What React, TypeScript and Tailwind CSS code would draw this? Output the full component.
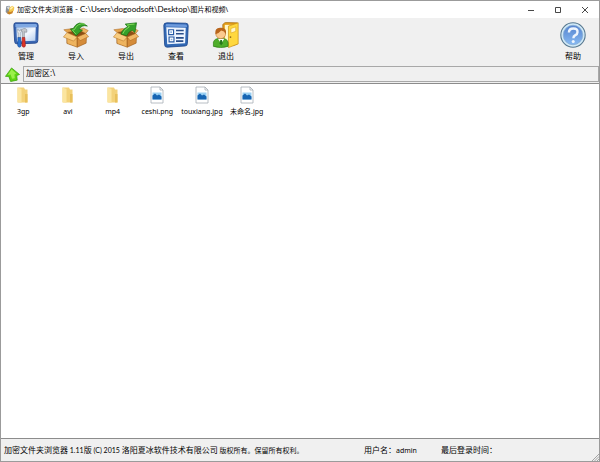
import type { ReactNode } from "react";

const fontFamily = "font-['Noto_Sans','Noto_Sans_CJK_SC',sans-serif]";

export default function App() {
    return (
        <div className={`flex min-h-screen flex-col border border-[#9b9b9b] bg-[#f0f0f0] text-black ${fontFamily}`}>
            <TitleBar />
            <Toolbar />
            <AddressBar />
            <FileList />
            <StatusBar />
        </div>
    );
}

function TitleBar() {
    return (
        <header className="flex h-[17px] items-center bg-white pr-px pl-1">
            <AppIcon />
            <h1 className="ml-[2px] flex-1 text-[7px] leading-[12px] whitespace-pre">
                加密文件夹浏览器
                <span className="font-['Lato',sans-serif] text-[8px]">{" - C:\\Users\\dogoodsoft\\Desktop\\"}</span>
                图片和视频\
            </h1>
            <WindowButton label="最小化">
                <path d="M1 4.5h6" />
            </WindowButton>
            <WindowButton label="最大化">
                <path d="M1.5 1.5h5v5h-5z" />
            </WindowButton>
            <WindowButton label="关闭">
                <path d="M1 1l6 6M7 1l-6 6" />
            </WindowButton>
        </header>
    );
}

function WindowButton({ label, children }: { label: string; children: ReactNode }) {
    return (
        <button type="button" aria-label={label} className="flex h-full w-[27px] items-center justify-center">
            <svg viewBox="0 0 8 8" className="size-2" fill="none" stroke="#333" strokeWidth="0.9">
                {children}
            </svg>
        </button>
    );
}

function Toolbar() {
    return (
        <nav className="flex h-[47px] items-start">
            <ToolButton label="管理"><ManageIcon /></ToolButton>
            <ToolButton label="导入"><ImportIcon /></ToolButton>
            <ToolButton label="导出"><ExportIcon /></ToolButton>
            <ToolButton label="查看"><ViewIcon /></ToolButton>
            <ToolButton label="退出"><ExitIcon /></ToolButton>
            <div className="ml-auto pr-px">
                <ToolButton label="帮助"><HelpIcon /></ToolButton>
            </div>
        </nav>
    );
}

function ToolButton({ label, children }: { label: string; children: ReactNode }) {
    return (
        <button type="button" className="flex w-[50px] flex-col items-center pt-1">
            {children}
            <span className="text-[8px] leading-4">{label}</span>
        </button>
    );
}

function AddressBar() {
    return (
        <div className="flex h-[18px] items-center">
            <button type="button" aria-label="向上" className="flex w-[22px] justify-center">
                <UpIcon />
            </button>
            <input
                type="text"
                aria-label="地址"
                defaultValue="加密区:\"
                className="h-4 min-w-0 flex-1 border border-[#a8a8a8] bg-[#f0f0f0] px-[2px] pb-[3px] text-[8px] leading-[12px] outline-none"
            />
        </div>
    );
}

const files = [
    { name: "3gp", type: "folder" },
    { name: "avi", type: "folder" },
    { name: "mp4", type: "folder" },
    { name: "ceshi.png", type: "image" },
    { name: "touxiang.jpg", type: "image" },
    { name: "未命名.jpg", type: "image" },
];

function FileList() {
    return (
        <main className="flex-1 border-y border-[#8c8c8c] bg-white pt-px">
            <ul className="grid w-[268px] grid-cols-6">
                {files.map((file) => (
                    <li key={file.name}>
                        <button type="button" className="flex w-full flex-col items-center">
                            {file.type === "folder" ? <FolderIcon /> : <ImageIcon />}
                            <span className="text-[7px] leading-[14px] whitespace-nowrap">{file.name}</span>
                        </button>
                    </li>
                ))}
            </ul>
        </main>
    );
}

function StatusBar() {
    return (
        <footer className="flex h-[22px] items-center pl-[3px] text-[8px] leading-[12px] whitespace-nowrap">
            <p className="w-[360px]">
                加密文件夹浏览器<Latin>{" 1.11"}</Latin>版<Latin>{" (C) 2015 "}</Latin>
                洛阳夏冰软件技术有限公司<span className="text-[7px]"> 版权所有。保留所有权利。</span>
            </p>
            <p className="w-[77px]">用户名：<span className="text-[7px]">admin</span></p>
            <p className="flex-1">最后登录时间：</p>
            <svg viewBox="0 0 8 8" className="size-2 self-end" stroke="#9a9a9a" strokeWidth="0.9">
                <path d="M1 8l7-7M3.5 8L8 3.5M6 8l2-2" />
            </svg>
        </footer>
    );
}

function Latin({ children }: { children: ReactNode }) {
    return <span className="font-['Lato',sans-serif] text-[7px]">{children}</span>;
}

function AppIcon() {
    return (
        <svg viewBox="0 0 16 16" className="size-[10px]">
            <path d="M2 2l5-1 2 3-1 8-4 2-3-3z" fill="#8c9299" />
            <path d="M3 3l4-1 1 3-3 2z" fill="#d5dce3" />
            <path d="M7 4l5-3 3 3-1 5-5 4-3-2z" fill="#f4c64e" />
            <path d="M8 5l4-3 1 2-4 4z" fill="#fff1ae" />
            <path d="M4 10l5 1 4-2-1 4-5 2-3-1z" fill="#c98224" />
        </svg>
    );
}

function ManageIcon() {
    return (
        <svg viewBox="0 0 32 32" className="h-[26px] w-[26px]">
            <defs>
                <linearGradient id="pane" x1="0" y1="0" x2="1" y2="1">
                    <stop offset="0" stopColor="#aecbf0" />
                    <stop offset="0.5" stopColor="#f2f7fe" />
                    <stop offset="1" stopColor="#b4cdef" />
                </linearGradient>
            </defs>
            <path d="M3 1h25q3 0 3 3l-.5 19q0 3-3 3L5 27q-3 0-3-3L1 4q0-3 2-3z" fill="#3b67b3" stroke="#1d4389" />
            <path d="M3 2.500h25q1.500 0 1.500 2V6H3z" fill="#7fa8e2" />
            <path d="M4 6.500h24l-.5 16.500-22.500 1z" fill="url(#pane)" />
            <path d="M6 8.500l-1 3 1.500 2V20h2.500v-6.500l1.500-2-.5-3-1.500 2.500H7.500z" fill="#e4e7eb" stroke="#818994" strokeWidth="0.6" />
            <path d="M10 10q2.500-2.500 5-2l2 1.500v3h-2l-1-.5v8h-2.500v-8z" fill="#c4c8cd" stroke="#767b83" strokeWidth="0.6" />
            <path d="M6 19h3.500l.5 9.500q0 2.500-2 2.500t-2.200-2.500z" fill="#2b72cf" stroke="#16468f" strokeWidth="0.7" />
            <path d="M11.500 19h3l.8 9.500q0 2.500-2 2.500T11 28.500z" fill="#dc3428" stroke="#951c1c" strokeWidth="0.7" />
        </svg>
    );
}

// the carton is shared by the import and export icons
function Carton() {
    return (
        <>
            <path d="M5 13l13-4 10 4v11l-11 6.500L4.500 26z" fill="#8d4f16" />
            <path d="M4.500 16l13 4v11l-12.500-4.500z" fill="#eeb45f" stroke="#a7651f" strokeWidth="0.7" />
            <path d="M17.500 20L29 15.500 28.500 26l-11 5z" fill="#d58c3a" stroke="#985817" strokeWidth="0.7" />
            <path d="M5 13L1 9.500 12 8l7 1.500z" fill="#e3a24b" stroke="#a7651f" strokeWidth="0.6" />
            <path d="M19 9.500l6-2 6 3-3 3.500z" fill="#edb563" stroke="#a7651f" strokeWidth="0.6" />
            <path d="M5 13L.5 18.500 13 23.500l4.500-5z" fill="#f8cc80" stroke="#b97729" strokeWidth="0.7" />
            <path d="M28 14l3.500 4L21 23l-3.500-4.500z" fill="#f0b765" stroke="#ae6a22" strokeWidth="0.7" />
        </>
    );
}

function ImportIcon() {
    return (
        <svg viewBox="0 0 32 32" className="h-[26px] w-7">
            <Carton />
            <path d="M30 5Q19-4 12.500 8l-3.500.5 7 8.500 8-7-4-1q3-6 10-4z" fill="#35a12a" stroke="#176d13" strokeWidth="0.8" />
            <path d="M27 2.500q-9-2-13 7l-2.500.5 4.500 5" fill="none" stroke="#83d75a" strokeWidth="1.200" />
        </svg>
    );
}

function ExportIcon() {
    return (
        <svg viewBox="0 0 32 32" className="h-[26px] w-7">
            <Carton />
            <path d="M10 15q1-6 8-9l-3-3.500L29 1l-2 12-3.500-3q-5 2-6.500 7z" fill="#35a12a" stroke="#176d13" strokeWidth="0.8" />
            <path d="M12 14.500q1-4.500 8-8.500l-2.500-2.500 9-1" fill="none" stroke="#83d75a" strokeWidth="1.200" />
        </svg>
    );
}

function ViewIcon() {
    return (
        <svg viewBox="0 0 32 32" className="h-[26px] w-7">
            <path d="M5 1l23 .5q3 0 3 3l-1 22q0 3-3 3L5 31q-3 0-3-3L1 4q0-3 4-3z" fill="#3168b4" stroke="#1b458d" />
            <path d="M4 2.500l23.500.5q2 0 2 2v1L3 5.500z" fill="#6e9bdd" />
            <path d="M4 6.500l24 .5-.8 19-22 1.500z" fill="#eef5ff" />
            <path d="M7 9.500h6v6H7zM7.500 18.500h6v6h-6z" fill="#fff" stroke="#2559a5" strokeWidth="1.400" />
            <path d="M9 11.500h2v2H9zM9.500 20.500h2v2h-2z" fill="#86aee0" />
            <path d="M16 10.500h9.500M16 14.500h9.500M16 19.500h9.500M16 23.500h9" stroke="#2a4f8b" strokeWidth="2" />
        </svg>
    );
}

function ExitIcon() {
    return (
        <svg viewBox="0 0 32 32" className="h-[26px] w-7">
            <path d="M12 3l3-2.500 15 .5v26l-4 1.500H12z" fill="#e29a15" stroke="#a36a0c" strokeWidth="0.8" />
            <path d="M14.500 3.500H27V26H14.500z" fill="#fff7c8" />
            <path d="M19 5l12-4v26l-12 4.500z" fill="#ffd83e" stroke="#c58a0d" strokeWidth="0.8" />
            <path d="M22 8l6-2v5.500L22 13.500z" fill="#fff8ca" stroke="#dda51b" strokeWidth="0.7" />
            <circle cx="21.500" cy="18.500" r="1.100" fill="#8b6a1b" />
            <path d="M.5 30v-5q1-5 9-5t9 5v5q-9 3-18 0z" fill="#4fae2b" stroke="#2c7a12" strokeWidth="0.8" />
            <path d="M6 20.500l4 6 4-6z" fill="#fff" />
            <path d="M9 22h2l.8 4-1.800 3-1.800-3z" fill="#27761c" />
            <circle cx="9.500" cy="14.500" r="6" fill="#fbc98d" stroke="#b56c27" strokeWidth="0.7" />
            <path d="M3 15Q1.500 6.500 9.500 7q8-.5 6.500 8-2-4-6-4.500-3 4-7 4.500z" fill="#b8651c" />
        </svg>
    );
}

function HelpIcon() {
    return (
        <svg viewBox="0 0 32 32" className="h-[26px] w-[26px]">
            <defs>
                <linearGradient id="disc" x1="0" y1="0" x2="0" y2="1">
                    <stop offset="0" stopColor="#5583ce" />
                    <stop offset="1" stopColor="#86b9f2" />
                </linearGradient>
            </defs>
            <circle cx="16" cy="16" r="15" fill="#d0e9f7" stroke="#57788f" strokeWidth="1.300" />
            <circle cx="16" cy="16" r="12" fill="url(#disc)" stroke="#87acd5" />
            <path d="M11 13q0-5 5.500-5t5 4.500q0 2.500-3 4-2 1-2 3.500" fill="none" stroke="#eef5fd" strokeWidth="3" />
            <circle cx="16.300" cy="24" r="1.900" fill="#eef5fd" />
        </svg>
    );
}

function UpIcon() {
    return (
        <svg viewBox="0 0 16 16" className="size-[15px]">
            <path d="M7 1l8.500 7-3 1 .5 5-7 1.500L4 10 .5 10z" fill="#5fd414" stroke="#3ba20d" strokeWidth="0.8" />
            <path d="M7 2.500l5 4.500-2 1 .5 4-3 .5L6 8 3 8.500z" fill="#9bf04b" />
        </svg>
    );
}

function FolderIcon() {
    return (
        <svg viewBox="0 0 16 20" className="h-5 w-4">
            <path d="M2.500 2.500H9l1 2h2.500v13h-10z" fill="#f3d27a" />
            <path d="M2.500 2.500l4 1.500v14l-4-1z" fill="#fbe5a0" />
            <path d="M10 9h2.500v8.500H10z" fill="#e8c05c" />
        </svg>
    );
}

function ImageIcon() {
    return (
        <svg viewBox="0 0 16 20" className="h-5 w-4">
            <path d="M2 2h9l3 3v13H2z" fill="#fff" stroke="#a6adb5" strokeWidth="0.8" />
            <path d="M11 2v3h3" fill="none" stroke="#a6adb5" strokeWidth="0.8" />
            <path d="M3.500 7.500h9v7h-9z" fill="#9bd0f3" />
            <path d="M3.500 14.500v-4l2.500-2 2 2 2-1 2.500 2v3z" fill="#1765b3" />
        </svg>
    );
}
